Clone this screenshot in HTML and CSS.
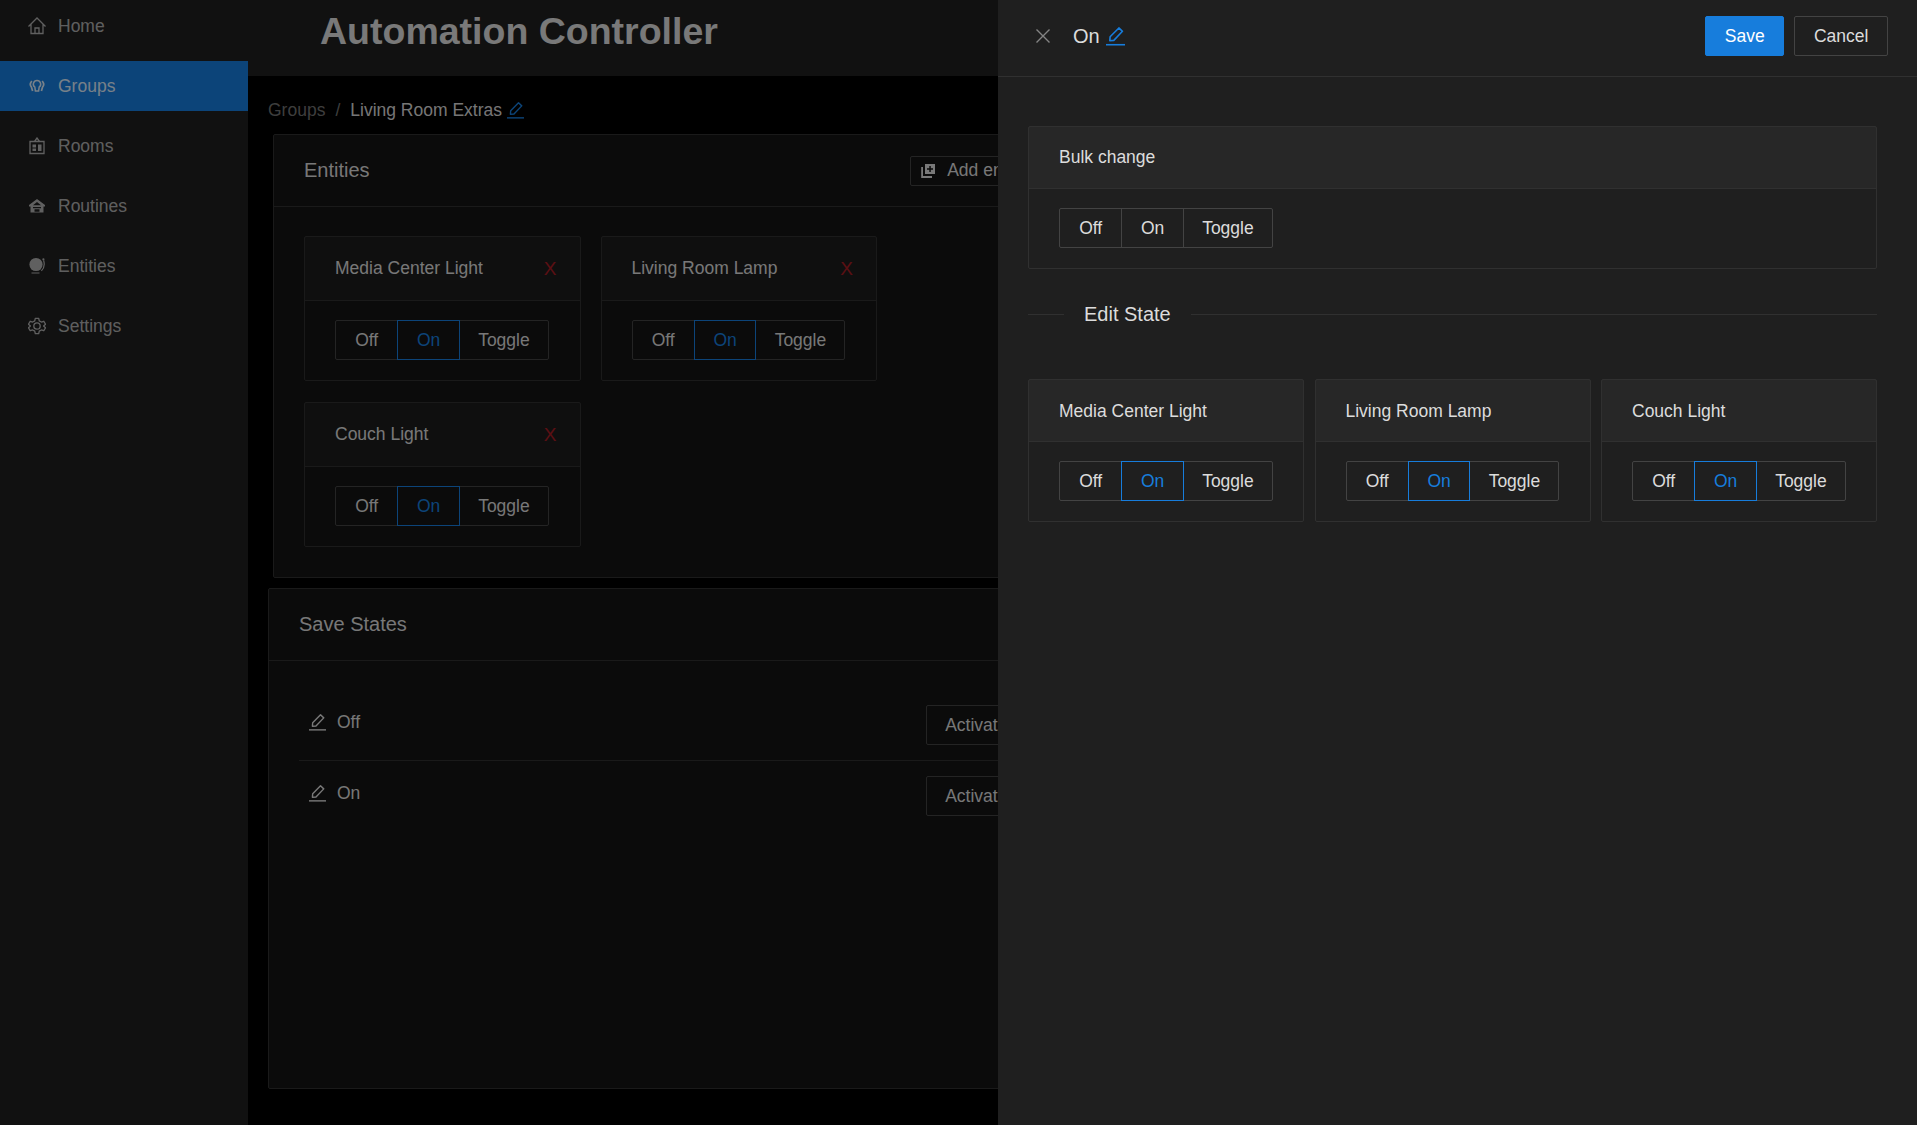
FILE: index.html
```html
<!DOCTYPE html>
<html lang="en">

<head>
    <meta charset="UTF-8">
    <meta name="viewport" content="width=device-width, initial-scale=1.0">
    <title>Automation Controller</title>
    <link rel="stylesheet" href="styles.css">
</head>

<body>
    <svg class="icon-defs" width="0" height="0">
        <symbol id="pencil" viewBox="0 0 18 18">
            <path d="M3.6 13 L3.9 9.2 L12.2 0.9 L15.6 4.1 L7.4 12.7 Z" fill="none" stroke="currentColor" stroke-width="1.5" stroke-linejoin="round"/>
            <path d="M0 16.8 H18" fill="none" stroke="currentColor" stroke-width="1.5"/>
        </symbol>
    </svg>

    <aside class="sidebar">
        <a class="nav-item">
            <svg class="nav-icon" viewBox="0 0 18 18"><path d="M0.5 9.5 L9 1 L17.5 9.5 M3 7.5 V16.5 H15 V7.5 M7 16.5 V11 H11 V16.5" fill="none" stroke="currentColor" stroke-width="1.3"/></svg>
            Home
        </a>
        <a class="nav-item active">
            <svg class="nav-icon" viewBox="0 0 18 18"><path d="M9 3.5 A3.6 3.6 0 0 1 11.2 10 L10.6 14 H7.4 L6.8 10 A3.6 3.6 0 0 1 9 3.5 Z" fill="none" stroke="currentColor" stroke-width="1.5"/><path d="M3.8 4 Q1 7.5 3.4 10 L4.6 14 M14.2 4 Q17 7.5 14.6 10 L13.4 14" fill="none" stroke="currentColor" stroke-width="1.7"/></svg>
            Groups
        </a>
        <a class="nav-item">
            <svg class="nav-icon" viewBox="0 0 18 18"><path d="M2 4.5 H16 V16.5 H2 Z M6.5 4.5 L9 1 L11.5 4.5" fill="none" stroke="currentColor" stroke-width="1.3"/><path d="M4.5 7.5 H8 V10.5 H4.5 Z M10 7.5 H13.5 V14 H10 Z M4.5 11.5 H8 V14 H4.5 Z" fill="currentColor"/></svg>
            Rooms
        </a>
        <a class="nav-item">
            <svg class="nav-icon" viewBox="0 0 18 18"><path d="M9 2 L17 8 V9.5 H15.5 V15.5 H2.5 V9.5 H1 V8 Z M9 5 L5 8.2 H13 Z M5 10 V11.2 H13 V10 Z M6.5 12.2 V14.8 H11.5 V12.2 Z" fill="currentColor" fill-rule="evenodd"/></svg>
            Routines
        </a>
        <a class="nav-item">
            <svg class="nav-icon" viewBox="0 0 18 18"><circle cx="8" cy="7.5" r="6.6" fill="currentColor"/><path d="M15.6 3.5 Q17.6 9.5 13.4 13.8 M3.5 16 H11.5" fill="none" stroke="currentColor" stroke-width="1.2"/><circle cx="15.4" cy="2.4" r="1.1" fill="currentColor"/></svg>
            Entities
        </a>
        <a class="nav-item">
            <svg class="nav-icon" viewBox="0 0 18 18"><path d="M7.2 1 H10.8 L11.4 3.6 L13.6 4.8 L16.2 4 L18 7.1 L16 9 L18 10.9 L16.2 14 L13.6 13.2 L11.4 14.4 L10.8 17 H7.2 L6.6 14.4 L4.4 13.2 L1.8 14 L0 10.9 L2 9 L0 7.1 L1.8 4 L4.4 4.8 L6.6 3.6 Z" transform="translate(0.5 0.5) scale(0.945)" fill="none" stroke="currentColor" stroke-width="1.4" stroke-linejoin="round"/><circle cx="9" cy="9" r="3.2" fill="none" stroke="currentColor" stroke-width="1.3"/></svg>
            Settings
        </a>
    </aside>

    <div class="page">
        <header class="top-bar">
            <h1>Automation Controller</h1>
        </header>

        <main class="content">
            <div class="breadcrumb">
                <span class="crumb-link">Groups</span>
                <span class="crumb-sep">/</span>
                <span>Living Room Extras</span>
                <svg class="pencil pencil-blue"><use href="#pencil"/></svg>
            </div>

            <section class="card entities-card">
                <div class="card-head">
                    <span class="card-title">Entities</span>
                    <button class="btn btn-small">
                        <svg class="add-icon" viewBox="0 0 16 16"><path d="M5 1 H15 V11 H5 Z M9.3 3 V5.3 H7 V6.8 H9.3 V9 H10.8 V6.8 H13 V5.3 H10.8 V3 Z" fill="currentColor" fill-rule="evenodd"/><path d="M3 4 H1.2 V15 H12 V13 H3 Z" fill="currentColor"/></svg>
                        Add entity
                    </button>
                </div>
                <div class="entity-grid">
                    <div class="card inner-card">
                        <div class="inner-head">
                            <span>Media Center Light</span>
                            <span class="remove">X</span>
                        </div>
                        <div class="inner-body">
                            <div class="btn-group"><button class="btn">Off</button><button class="btn selected">On</button><button class="btn">Toggle</button></div>
                        </div>
                    </div>
                    <div class="card inner-card">
                        <div class="inner-head">
                            <span>Living Room Lamp</span>
                            <span class="remove">X</span>
                        </div>
                        <div class="inner-body">
                            <div class="btn-group"><button class="btn">Off</button><button class="btn selected">On</button><button class="btn">Toggle</button></div>
                        </div>
                    </div>
                    <div class="card inner-card">
                        <div class="inner-head">
                            <span>Couch Light</span>
                            <span class="remove">X</span>
                        </div>
                        <div class="inner-body">
                            <div class="btn-group"><button class="btn">Off</button><button class="btn selected">On</button><button class="btn">Toggle</button></div>
                        </div>
                    </div>
                </div>
            </section>

            <section class="card states-card">
                <div class="card-head">
                    <span class="card-title">Save States</span>
                </div>
                <div class="state-list">
                    <div class="state-row">
                        <span class="state-name"><svg class="pencil"><use href="#pencil"/></svg>Off</span>
                        <button class="btn">Activate</button>
                    </div>
                    <div class="state-row">
                        <span class="state-name"><svg class="pencil"><use href="#pencil"/></svg>On</span>
                        <button class="btn">Activate</button>
                    </div>
                </div>
            </section>
        </main>
    </div>

    <div class="mask"></div>

    <div class="drawer">
        <div class="drawer-head">
            <svg class="close-icon" viewBox="0 0 14 14"><path d="M0.5 0.5 L13.5 13.5 M13.5 0.5 L0.5 13.5" fill="none" stroke="currentColor" stroke-width="1.4"/></svg>
            <span class="drawer-title">On</span>
            <svg class="pencil pencil-title"><use href="#pencil"/></svg>
            <div class="drawer-actions">
                <button class="btn btn-primary">Save</button>
                <button class="btn">Cancel</button>
            </div>
        </div>
        <div class="drawer-body">
            <div class="card panel-card">
                <div class="inner-head">Bulk change</div>
                <div class="inner-body">
                    <div class="btn-group"><button class="btn">Off</button><button class="btn">On</button><button class="btn">Toggle</button></div>
                </div>
            </div>

            <div class="divider"><span>Edit State</span></div>

            <div class="state-grid">
                <div class="card panel-card">
                    <div class="inner-head">Media Center Light</div>
                    <div class="inner-body">
                        <div class="btn-group"><button class="btn">Off</button><button class="btn selected">On</button><button class="btn">Toggle</button></div>
                    </div>
                </div>
                <div class="card panel-card">
                    <div class="inner-head">Living Room Lamp</div>
                    <div class="inner-body">
                        <div class="btn-group"><button class="btn">Off</button><button class="btn selected">On</button><button class="btn">Toggle</button></div>
                    </div>
                </div>
                <div class="card panel-card">
                    <div class="inner-head">Couch Light</div>
                    <div class="inner-body">
                        <div class="btn-group"><button class="btn">Off</button><button class="btn selected">On</button><button class="btn">Toggle</button></div>
                    </div>
                </div>
            </div>
        </div>
    </div>
</body>

</html>
```

FILE: styles.css
```css
* {
    box-sizing: border-box;
}

body {
    font-family: 'Liberation Sans', Arial, sans-serif;
    font-size: 17.5px;
    color: rgba(255, 255, 255, 0.85);
    background-color: #000;
    margin: 0;
    height: 100vh;
    display: flex;
    overflow: hidden;
}

.icon-defs {
    position: absolute;
}

/* Sidebar */
.sidebar {
    width: 248px;
    flex-shrink: 0;
    background-color: #1f1f1f;
    padding-top: 1px;
}

.nav-item {
    display: flex;
    align-items: center;
    gap: 12px;
    height: 50px;
    margin-bottom: 10px;
    padding-left: 28px;
    color: rgba(255, 255, 255, 0.65);
}

.nav-item.active {
    background-color: #177ddc;
    color: rgba(255, 255, 255, 0.85);
}

.nav-icon {
    width: 18px;
    height: 18px;
    flex-shrink: 0;
}

/* Main page */
.page {
    flex: 1;
    min-width: 0;
    display: flex;
    flex-direction: column;
}

.top-bar {
    height: 76px;
    flex-shrink: 0;
    background-color: #1f1f1f;
    padding-left: 72px;
}

.top-bar h1 {
    margin: 0;
    font-size: 37.5px;
    line-height: 63px;
    font-weight: bold;
}

.content {
    flex: 1;
    padding: 21px 0 0 20px;
}

.breadcrumb {
    display: flex;
    align-items: center;
    height: 26px;
    margin-bottom: 11px;
}

.crumb-link {
    color: rgba(255, 255, 255, 0.45);
}

.crumb-sep {
    color: rgba(255, 255, 255, 0.45);
    margin: 0 10px;
}

.pencil {
    width: 17px;
    height: 17px;
    flex-shrink: 0;
}

.breadcrumb .pencil {
    margin-left: 5px;
}

.pencil-blue,
.pencil-title {
    color: #177ddc;
}

/* Cards */
.card {
    background-color: #141414;
    border: 1px solid #303030;
    border-radius: 2px;
}

.card-head {
    height: 72px;
    padding: 0 30px;
    display: flex;
    align-items: center;
    justify-content: space-between;
    border-bottom: 1px solid #303030;
}

.card-title {
    font-size: 20px;
}

.entities-card {
    width: 791px;
    margin-left: 5px;
    margin-bottom: 10px;
}

.entity-grid {
    display: flex;
    flex-wrap: wrap;
    gap: 21px 20px;
    padding: 29px 30px 30px;
}

.inner-card {
    width: 276.5px;
}

.inner-head {
    height: 64px;
    padding: 0 23px 0 30px;
    display: flex;
    align-items: center;
    justify-content: space-between;
    background-color: rgba(255, 255, 255, 0.04);
    border-bottom: 1px solid #303030;
}

.inner-body {
    padding: 19px 30px 20px;
}

.remove {
    color: #a61d24;
    font-size: 19px;
}

.states-card {
    width: 790px;
    height: 501px;
}

.state-list {
    padding: 29px 30px 0;
}

.state-row {
    display: flex;
    justify-content: space-between;
    align-items: flex-start;
    padding: 15px 0;
}

.state-row + .state-row {
    border-top: 1px solid #303030;
}

.state-name {
    display: flex;
    align-items: center;
    gap: 11px;
    padding-left: 10px;
    margin-top: 4px;
    line-height: 26px;
}

/* Buttons */
.btn {
    height: 40px;
    padding: 0 18.6px;
    font-family: inherit;
    font-size: 17.5px;
    color: rgba(255, 255, 255, 0.85);
    background-color: transparent;
    border: 1px solid #434343;
    border-radius: 2px;
    white-space: nowrap;
}

.btn-small {
    height: 30px;
    padding: 0 7px 0 9px;
    display: flex;
    align-items: center;
    gap: 11px;
}

.add-icon {
    width: 16px;
    height: 16px;
}

.btn-group {
    display: flex;
}

.btn-group .btn {
    border-radius: 0;
}

.btn-group .btn + .btn {
    margin-left: -1px;
}

.btn-group .btn:first-child {
    padding: 0 19.2px;
    border-radius: 2px 0 0 2px;
}

.btn-group .btn:last-child {
    padding: 0 18.2px;
    border-radius: 0 2px 2px 0;
}

.btn.selected {
    color: #177ddc;
    border-color: #177ddc;
    position: relative;
}

.btn-primary {
    color: #fff;
    background-color: #177ddc;
    border-color: #177ddc;
}

/* Overlay and drawer */
.mask {
    position: fixed;
    inset: 0;
    background-color: rgba(0, 0, 0, 0.45);
}

.drawer {
    position: fixed;
    top: 0;
    right: 0;
    bottom: 0;
    width: 919px;
    background-color: #1f1f1f;
}

.drawer-head {
    height: 77px;
    padding: 0 29px 4px 38px;
    display: flex;
    align-items: center;
    border-bottom: 1px solid #303030;
}

.close-icon {
    width: 14px;
    height: 14px;
    margin-right: 23px;
    color: rgba(255, 255, 255, 0.45);
}

.drawer-title {
    font-size: 20px;
}

.pencil-title {
    width: 19px;
    height: 19px;
    margin-left: 6px;
}

.drawer-actions {
    margin-left: auto;
    display: flex;
    gap: 10px;
}

.drawer-body {
    padding: 49px 40px 0 30px;
}

.panel-card {
    background-color: transparent;
}

.panel-card .inner-head {
    height: 62px;
    padding-left: 30px;
}

.state-grid .inner-head {
    padding-top: 1px;
}

.divider {
    display: flex;
    align-items: center;
    font-size: 20px;
    line-height: 30px;
    margin: 30px 0 50px;
}

.divider::before,
.divider::after {
    content: "";
    height: 1px;
    background-color: #303030;
}

.divider::before {
    width: 36px;
}

.divider::after {
    flex: 1;
}

.divider span {
    padding: 0 20px;
}

.state-grid {
    display: grid;
    grid-template-columns: repeat(3, minmax(0, 1fr));
    gap: 10.5px;
}
```
